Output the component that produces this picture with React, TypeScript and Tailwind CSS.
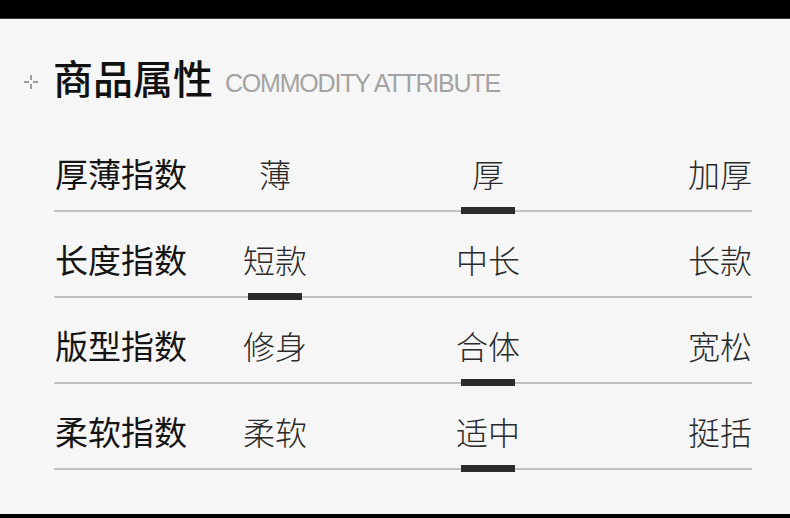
const rows = [
  { label: "厚薄指数", values: ["薄", "厚", "加厚"], active: 1 },
  { label: "长度指数", values: ["短款", "中长", "长款"], active: 0 },
  { label: "版型指数", values: ["修身", "合体", "宽松"], active: 1 },
  { label: "柔软指数", values: ["柔软", "适中", "挺括"], active: 1 },
];

const cjk = "font-['Noto_Sans_CJK_SC','Noto_Sans',sans-serif]";

function Bar() {
  return (
    <span className="absolute left-1/2 -translate-x-1/2 -bottom-[25px] w-[54px] h-[7px] bg-[#2b2b2b]" />
  );
}

export default function App() {
  return (
    <div className="w-[790px] h-[518px] bg-black flex flex-col overflow-hidden">
      <div className="h-[19px] bg-black border-b border-[#3a3a3a]" />
      <div className={`flex-1 bg-[#f6f6f6] pt-[36px] ${cjk}`}>
        {/* Header */}
        <div className="flex items-end pl-[23px]">
          <svg width="16" height="16" viewBox="0 0 16 16" className="mb-[9px] mr-[14px]">
            <path
              d="M8 1v5M8 10v5M1 8h5M10 8h5"
              stroke="#444"
              strokeWidth="1"
              fill="none"
            />
          </svg>
          <span className="text-[40px] leading-[44px] font-medium text-[#111]">
            商品属性
          </span>
          <span className="ml-[12px] mb-[2px] text-[25px] leading-[28px] tracking-[-1.2px] text-[#a3a3a3] font-['Liberation_Sans',sans-serif]">
            COMMODITY ATTRIBUTE
          </span>
        </div>

        {/* Attribute rows */}
        <div className="ml-[54px] w-[698px] mt-[27px]">
          {rows.map((r, i) => (
            <div
              key={i}
              className="grid grid-cols-[176px_90px_1fr_90px_1fr_90px] items-center pt-[31px] pb-[21px] border-b-2 border-[#c2c2c2]"
            >
              <div className="text-[33px] leading-[32px] text-[#151515] pl-[1px]">
                {r.label}
              </div>
              <div className="relative text-center text-[32px] leading-[32px] font-light text-[#2a2a2a]">
                {r.values[0]}
                {r.active === 0 && <Bar />}
              </div>
              <div />
              <div className="relative -ml-[6px] text-center text-[32px] leading-[32px] font-light text-[#2a2a2a]">
                {r.values[1]}
                {r.active === 1 && <Bar />}
              </div>
              <div />
              <div className="text-right text-[32px] leading-[32px] font-light text-[#2a2a2a]">
                {r.values[2]}
              </div>
            </div>
          ))}
        </div>
      </div>
      <div className="h-[4px] bg-black" />
    </div>
  );
}
